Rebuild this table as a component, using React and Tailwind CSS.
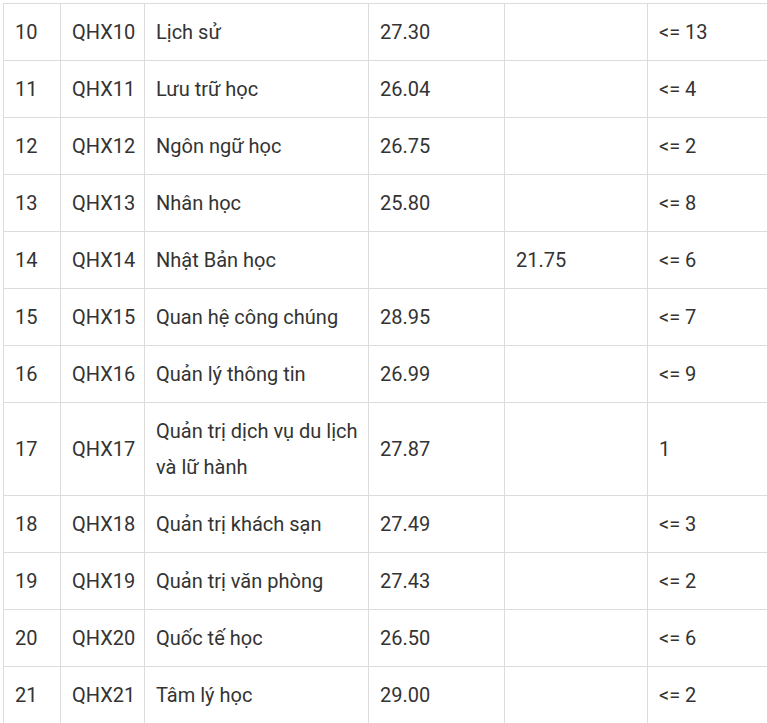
import React from 'react';

const rows = [
  ['10', 'QHX10', 'Lịch sử', '27.30', '', '<= 13'],
  ['11', 'QHX11', 'Lưu trữ học', '26.04', '', '<= 4'],
  ['12', 'QHX12', 'Ngôn ngữ học', '26.75', '', '<= 2'],
  ['13', 'QHX13', 'Nhân học', '25.80', '', '<= 8'],
  ['14', 'QHX14', 'Nhật Bản học', '', '21.75', '<= 6'],
  ['15', 'QHX15', 'Quan hệ công chúng', '28.95', '', '<= 7'],
  ['16', 'QHX16', 'Quản lý thông tin', '26.99', '', '<= 9'],
  ['17', 'QHX17', 'Quản trị dịch vụ du lịch và lữ hành', '27.87', '', '1'],
  ['18', 'QHX18', 'Quản trị khách sạn', '27.49', '', '<= 3'],
  ['19', 'QHX19', 'Quản trị văn phòng', '27.43', '', '<= 2'],
  ['20', 'QHX20', 'Quốc tế học', '26.50', '', '<= 6'],
  ['21', 'QHX21', 'Tâm lý học', '29.00', '', '<= 2'],
];

const App = () => {
  return (
    <div className="w-[767px] h-[723px] overflow-hidden bg-white pl-[3px] pt-[3px]">
      <table
        className="table-fixed border-collapse w-[800px] text-[20px] leading-[36px] text-[#333333]"
        style={{ fontFamily: 'Roboto, "Liberation Sans", sans-serif' }}
      >
        <colgroup>
          <col className="w-[57px]" />
          <col className="w-[84px]" />
          <col className="w-[224px]" />
          <col className="w-[136px]" />
          <col className="w-[143px]" />
          <col className="w-[156px]" />
        </colgroup>
        <tbody>
          {rows.map((r) => (
            <tr key={r[0]}>
              {r.map((c, i) => (
                <td
                  key={i}
                  className="border border-[#dcdcdc] pl-[11px] pr-[8px] py-[10px] align-middle"
                >
                  {c}
                </td>
              ))}
            </tr>
          ))}
        </tbody>
      </table>
    </div>
  );
};

export default App;
